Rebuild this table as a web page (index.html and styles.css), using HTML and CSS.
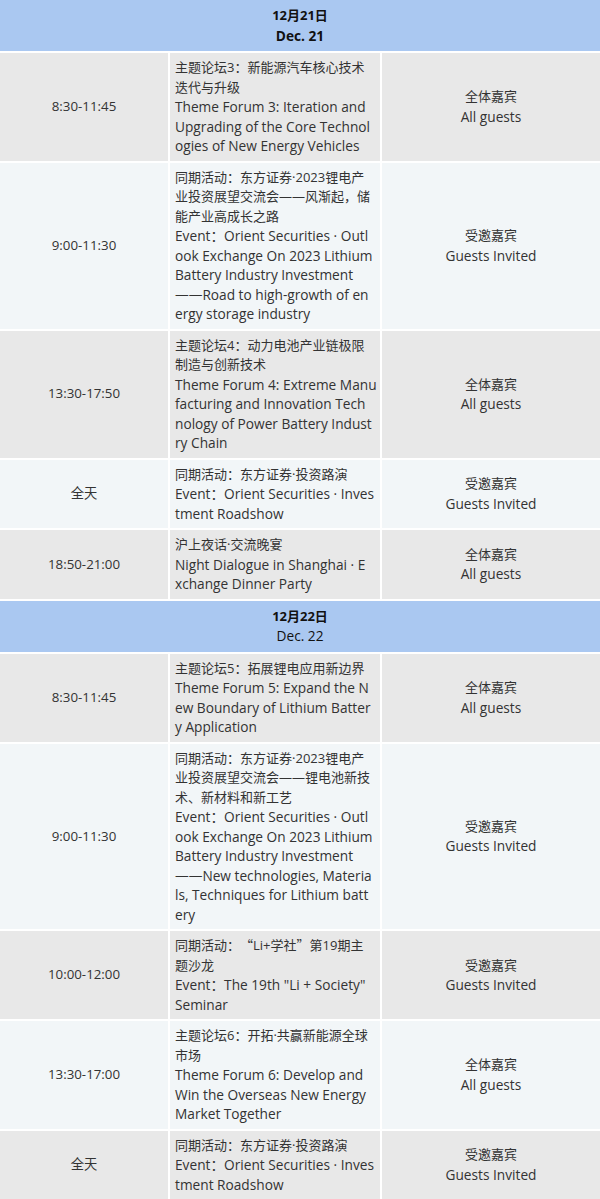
FILE: index.html
```html
<!DOCTYPE html>
<html lang="zh">
<head>
<meta charset="utf-8">
<link rel="stylesheet" href="styles.css">
</head>
<body>
<table class="agenda">
  <colgroup>
    <col class="c-time">
    <col class="c-topic">
    <col class="c-guest">
  </colgroup>
  <tbody>
    <tr class="day">
      <td colspan="3"><strong class="zh">12月21日</strong><strong class="en">Dec. 21</strong></td>
    </tr>
    <tr class="grey">
      <td class="time">8:30-11:45</td>
      <td class="topic"><span class="zh">主题论坛3<span class="p">：</span>新能源汽车核心技术迭代与升级</span><span class="en">Theme Forum 3: Iteration and<br>Upgrading of the Core Technol<br>ogies of New Energy Vehicles</span></td>
      <td class="guest"><span class="zh">全体嘉宾</span><span class="en">All guests</span></td>
    </tr>
    <tr class="light">
      <td class="time">9:00-11:30</td>
      <td class="topic"><span class="zh">同期活动<span class="p">：</span>东方证券·2023锂电产业投资展望交流会——风渐起<span class="p">，</span>储能产业高成长之路</span><span class="en">Event：Orient Securities · Outl<br>ook Exchange On 2023 Lithium<br>Battery Industry Investment<br>——Road to high-growth of en<br>ergy storage industry</span></td>
      <td class="guest"><span class="zh">受邀嘉宾</span><span class="en">Guests Invited</span></td>
    </tr>
    <tr class="grey">
      <td class="time">13:30-17:50</td>
      <td class="topic"><span class="zh">主题论坛4<span class="p">：</span>动力电池产业链极限制造与创新技术</span><span class="en">Theme Forum 4: Extreme Manu<br>facturing and Innovation Tech<br>nology of Power Battery Indust<br>ry Chain</span></td>
      <td class="guest"><span class="zh">全体嘉宾</span><span class="en">All guests</span></td>
    </tr>
    <tr class="light">
      <td class="time">全天</td>
      <td class="topic"><span class="zh">同期活动<span class="p">：</span>东方证券·投资路演</span><span class="en">Event：Orient Securities · Inves<br>tment Roadshow</span></td>
      <td class="guest"><span class="zh">受邀嘉宾</span><span class="en">Guests Invited</span></td>
    </tr>
    <tr class="grey">
      <td class="time">18:50-21:00</td>
      <td class="topic"><span class="zh">沪上夜话·交流晚宴</span><span class="en">Night Dialogue in Shanghai · E<br>xchange Dinner Party</span></td>
      <td class="guest"><span class="zh">全体嘉宾</span><span class="en">All guests</span></td>
    </tr>
    <tr class="day">
      <td colspan="3"><strong class="zh">12月22日</strong><span class="en">Dec. 22</span></td>
    </tr>
    <tr class="grey">
      <td class="time">8:30-11:45</td>
      <td class="topic"><span class="zh">主题论坛5<span class="p">：</span>拓展锂电应用新边界</span><span class="en">Theme Forum 5: Expand the N<br>ew Boundary of Lithium Batter<br>y Application</span></td>
      <td class="guest"><span class="zh">全体嘉宾</span><span class="en">All guests</span></td>
    </tr>
    <tr class="light">
      <td class="time">9:00-11:30</td>
      <td class="topic"><span class="zh">同期活动<span class="p">：</span>东方证券·2023锂电产业投资展望交流会——锂电池新技术、新材料和新工艺</span><span class="en">Event：Orient Securities · Outl<br>ook Exchange On 2023 Lithium<br>Battery Industry Investment<br>——New technologies, Materia<br>ls, Techniques for Lithium batt<br>ery</span></td>
      <td class="guest"><span class="zh">受邀嘉宾</span><span class="en">Guests Invited</span></td>
    </tr>
    <tr class="grey">
      <td class="time">10:00-12:00</td>
      <td class="topic"><span class="zh">同期活动<span class="p">：</span><span class="q q-open">“</span>Li+学社<span class="q q-close">”</span>第19期主题沙龙</span><span class="en">Event：The 19th "Li + Society"<br>Seminar</span></td>
      <td class="guest"><span class="zh">受邀嘉宾</span><span class="en">Guests Invited</span></td>
    </tr>
    <tr class="light">
      <td class="time">13:30-17:00</td>
      <td class="topic"><span class="zh">主题论坛6<span class="p">：</span>开拓·共赢新能源全球市场</span><span class="en">Theme Forum 6: Develop and<br>Win the Overseas New Energy<br>Market Together</span></td>
      <td class="guest"><span class="zh">全体嘉宾</span><span class="en">All guests</span></td>
    </tr>
    <tr class="grey">
      <td class="time">全天</td>
      <td class="topic"><span class="zh">同期活动<span class="p">：</span>东方证券·投资路演</span><span class="en">Event：Orient Securities · Inves<br>tment Roadshow</span></td>
      <td class="guest"><span class="zh">受邀嘉宾</span><span class="en">Guests Invited</span></td>
    </tr>
  </tbody>
</table>
</body>
</html>
```

FILE: styles.css
```css
html, body {
  margin: 0;
  padding: 0;
  background: #ffffff;
}

.agenda {
  width: 600px;
  table-layout: fixed;
  border-collapse: separate;
  border-spacing: 0;
  font-family: "Open Sans", "Noto Sans CJK SC", sans-serif;
  font-size: 13.3px;
  line-height: 19.5px;
  color: #333333;
}

.c-time { width: 170px; }
.c-topic { width: 212px; }
.c-guest { width: 218px; }

.agenda td {
  padding: 5px 5px;
  border-bottom: 2px solid #ffffff;
  vertical-align: middle;
  word-break: break-all;
}

.agenda td.time,
.agenda td.topic {
  border-right: 2px solid #ffffff;
}

.agenda td.time,
.agenda td.guest {
  text-align: center;
}

.agenda td.topic {
  text-align: left;
  overflow: hidden;
}

.zh,
.en {
  display: block;
  line-height: 19.5px;
}

.zh {
  font-size: 13px;
}

.en {
  font-family: "Open Sans", "Noto Sans CJK TC", sans-serif;
  font-size: 13.7px;
}

.topic .en {
  white-space: nowrap;
}

.p {
  font-family: "Noto Sans CJK TC", sans-serif;
  line-height: 1;
}

.q {
  display: inline-block;
  width: 13px;
  font-family: "Noto Sans CJK SC", sans-serif;
  line-height: 1;
}

.q-open {
  text-align: right;
}

.q-close {
  text-align: left;
}

.day td {
  background: #aac8f1;
  padding: 6px 5px;
  text-align: center;
  color: #111111;
}

.day strong {
  font-weight: 700;
}

.grey td {
  background: #e8e8e8;
}

.light td {
  background: #f2f6f8;
}
```
